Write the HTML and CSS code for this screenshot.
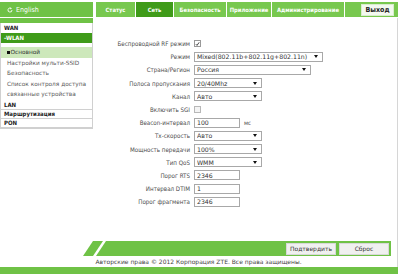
FILE: index.html
```html
<html>

<head>
    <link rel="stylesheet" href="styles.css">
</head>

<body>
    <div class="top">
        <div class="lang">
            <svg class="langIcon" width="6" height="6" viewBox="0 0 6 6"><path d="M5 3a2 2 0 1 1-1-1.7" fill="none" stroke="#fff" stroke-width="0.9"/><path d="M3.3 0.4l1.6 0.9-1.3 1.1z" fill="#fff"/></svg>
            English
        </div>
        <ul class="tabs">
            <li class="t1">Статус</li>
            <li class="t2 on">Сеть</li>
            <li class="t3">Безопасность</li>
            <li class="t4">Приложение</li>
            <li class="t5">Администрирование</li>
        </ul>
        <div class="exitBar">
            <button class="exit">Выход</button>
        </div>
    </div>

    <div class="page">
        <div class="content">
            <div class="side">
                <div class="sideHead"></div>
                <div class="menu">
                    <div class="item">WAN</div>
                    <div class="item open">-WLAN</div>
                    <ul class="sub">
                        <li class="cur"><span class="dot"></span>Основной</li>
                        <li>Настройки мульти-SSID</li>
                        <li>Безопасность</li>
                        <li>Список контроля доступа</li>
                        <li>связанные устройства</li>
                    </ul>
                    <div class="item line">LAN</div>
                    <div class="item line">Маршрутизация</div>
                    <div class="item line">PON</div>
                </div>
            </div>

            <div class="form">
                <div class="row">
                    <label>Беспроводной RF режим</label>
                    <span class="check on"><svg width="6" height="6" viewBox="0 0 6 6"><path d="M1 3.2l1.4 1.5L5 1" fill="none" stroke="#222" stroke-width="1"/></svg></span>
                </div>
                <div class="row">
                    <label>Режим</label>
                    <span class="sel wide"><select><option>Mixed(802.11b+802.11g+802.11n)</option></select></span>
                </div>
                <div class="row">
                    <label>Страна/Регион</label>
                    <span class="sel mid"><select><option>Россия</option></select></span>
                </div>
                <div class="row">
                    <label>Полоса пропускания</label>
                    <span class="sel"><select><option>20/40Mhz</option></select></span>
                </div>
                <div class="row">
                    <label>Канал</label>
                    <span class="sel"><select><option>Авто</option></select></span>
                </div>
                <div class="row">
                    <label>Включить SGI</label>
                    <span class="check"></span>
                </div>
                <div class="row">
                    <label>Beacon-интервал</label>
                    <input value="100"><span class="unit">мс</span>
                </div>
                <div class="row">
                    <label>Tx-скорость</label>
                    <span class="sel"><select><option>Авто</option></select></span>
                </div>
                <div class="row">
                    <label>Мощность передачи</label>
                    <span class="sel"><select><option>100%</option></select></span>
                </div>
                <div class="row">
                    <label>Тип QoS</label>
                    <span class="sel"><select><option>WMM</option></select></span>
                </div>
                <div class="row">
                    <label>Порог RTS</label>
                    <input value="2346">
                </div>
                <div class="row">
                    <label>Интервал DTIM</label>
                    <input value="1">
                </div>
                <div class="row">
                    <label>Порог фрагмента</label>
                    <input value="2346">
                </div>
            </div>
        </div>

        <div class="actions">
            <svg class="slant" width="24" height="15" viewBox="0 0 24 15"><polygon points="1,15 11,0 21,0 11,15" fill="#6fc246"/><polygon points="14,15 24,0 24,15" fill="#6fc246"/></svg>
            <div class="actionFill">
                <button>Подтвердить</button>
                <button>Сброс</button>
            </div>
        </div>
        <div class="copy">Авторские права © 2012 Корпорация ZTE. Все права защищены.</div>
    </div>
    <div class="bottom"></div>
</body>

</html>
```

FILE: styles.css
```css
body {
    margin: 0;
    width: 400px;
    font-family: "DejaVu Sans Condensed", "DejaVu Sans", Verdana, sans-serif;
    font-stretch: condensed;
    font-size: 6px;
    color: #333;
    background: #fff;
}

.top {
    display: flex;
    height: 18px;
    padding-top: 2px;
    box-sizing: border-box;
}

.lang {
    width: 93px;
    height: 15px;
    background: #6fc246;
    color: #fff;
    font-size: 7px;
    display: flex;
    align-items: center;
    gap: 3px;
    padding-left: 7px;
    box-sizing: border-box;
}

.tabs {
    display: flex;
    list-style: none;
    margin: 0 0 0 3px;
    padding: 0;
    gap: 1px;
}

.tabs li {
    height: 15px;
    background: #78c84f;
    color: #fff;
    font-weight: bold;
    font-size: 5.8px;
    display: flex;
    align-items: center;
    justify-content: center;
}

.tabs .on {
    background: #3f9b19;
}

.t1 { width: 39px; }
.t2 { width: 37px; }
.t3 { width: 52px; }
.t4 { width: 44px; }
.t5 { width: 72px; }

.exitBar {
    width: 53px;
    height: 15px;
    margin-left: 1px;
    background: #78c84f;
    display: flex;
    align-items: center;
}

.exit {
    margin-left: 16px;
    width: 33px;
    height: 12px;
    padding: 0;
    border: 1px solid #d9eccd;
    background: #f3f9ef;
    font-family: inherit;
    font-size: 7px;
    font-weight: bold;
    color: #222;
}

.page {
    width: 398px;
    border-right: 1px solid #d6d6d6;
    box-sizing: border-box;
}

.content {
    display: flex;
    height: 223px;
}

.side {
    width: 93px;
}

.sideHead {
    height: 5px;
    background: #6fc246;
}

.menu {
    border: 1px solid #d0d0d0;
    border-top: none;
}

.item {
    height: 10px;
    line-height: 10px;
    padding-left: 3px;
    font-weight: bold;
    color: #222;
}

.item.open {
    height: 10px;
    line-height: 10px;
    background: #3f9b19;
    color: #fff;
}

.item.line {
    height: 8px;
    line-height: 8px;
    border-bottom: 1px solid #d0d0d0;
}

.sub {
    list-style: none;
    margin: 0;
    padding: 4px 0 1px 0;
    font-family: "DejaVu Sans", Verdana, sans-serif;
    font-stretch: normal;
    font-size: 5.8px;
}

.sub li {
    height: 10.5px;
    line-height: 10.5px;
    padding-left: 6px;
    color: #5a5a5a;
}

.sub .cur {
    background: #cde8bb;
    color: #333;
}

.dot {
    display: inline-block;
    width: 2.5px;
    height: 2.5px;
    background: #111;
    margin-right: 1px;
    vertical-align: 0.5px;
}

.form {
    margin-top: 19px;
}

.row {
    display: flex;
    align-items: center;
    height: 13.2px;
}

.row label {
    width: 97px;
    text-align: right;
    padding-right: 4px;
    font-size: 6.2px;
    color: #4d4d4d;
}

.check {
    width: 7px;
    height: 7px;
    border: 1px solid #b8b8b8;
    box-sizing: border-box;
    background: #f4f4f4;
    display: flex;
    align-items: center;
    justify-content: center;
}

.check.on {
    border-color: #999;
    background: #fff;
}

.sel {
    position: relative;
    width: 68px;
    height: 10px;
}

.sel.wide { width: 129px; }
.sel.mid { width: 117px; }

.sel select, .row input {
    appearance: none;
    width: 100%;
    height: 10px;
    margin: 0;
    padding: 0 2px;
    border: 1px solid #a8a8a8;
    border-radius: 0;
    box-sizing: border-box;
    background: #fff;
    font-family: "DejaVu Sans", Verdana, sans-serif;
    font-stretch: normal;
    font-size: 6.2px;
    color: #333;
    outline: none;
}

.sel::after {
    content: "";
    position: absolute;
    right: 5px;
    top: 3.5px;
    border-left: 2px solid transparent;
    border-right: 2px solid transparent;
    border-top: 3px solid #111;
}

.row input {
    width: 46px;
}

.unit {
    margin-left: 4px;
    color: #4d4d4d;
}

.actions {
    display: flex;
    height: 15px;
    margin-left: 82px;
    margin-right: 6px;
}

.actionFill {
    flex: 1;
    background: #6fc246;
    display: flex;
    justify-content: flex-end;
    align-items: center;
    gap: 3px;
    padding-right: 2px;
}

.actionFill button {
    width: 50px;
    height: 12px;
    padding: 0;
    border: 1px solid #d8d8d8;
    background: #f0f0f0;
    font-family: "DejaVu Sans", Verdana, sans-serif;
    font-stretch: normal;
    font-size: 6px;
    color: #333;
}

.copy {
    height: 11px;
    line-height: 11px;
    text-align: center;
    font-family: "DejaVu Sans", Verdana, sans-serif;
    font-stretch: normal;
    color: #444;
}

.bottom {
    width: 398px;
    height: 7px;
    background: #6fc246;
}
```
